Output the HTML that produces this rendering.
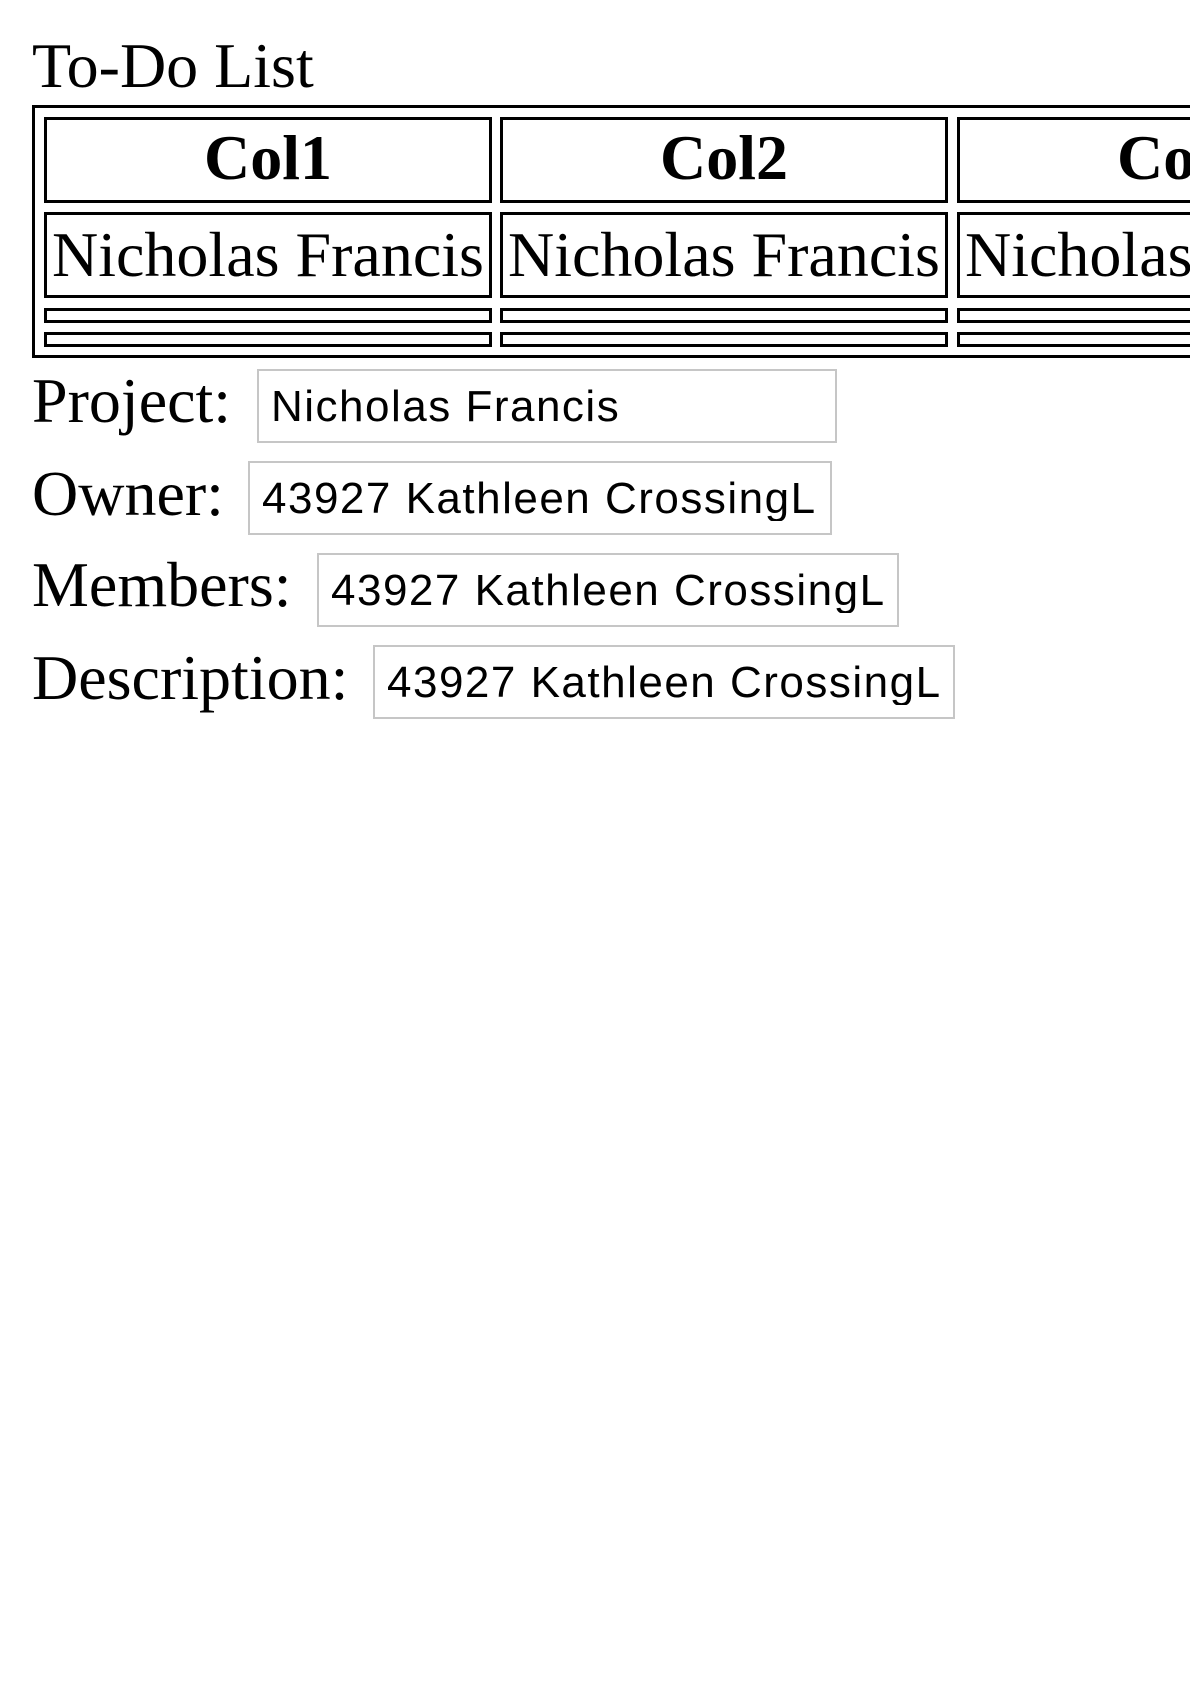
<!DOCTYPE html>
<html><head><meta charset="utf-8"><style>
html,body{margin:0;padding:0;width:1190px;height:1684px;overflow:hidden;background:#fff;}
#w{position:relative;width:1190px;height:1684px;overflow:hidden;}
.a{position:absolute;white-space:nowrap;}
.s{font-family:"Liberation Serif",serif;font-size:64px;line-height:64px;color:#000;}
.b{position:absolute;border:3px solid #000;box-sizing:border-box;}
.in{position:absolute;border:2px solid #c6c6c6;box-sizing:border-box;height:74px;overflow:hidden;}
.in span{position:absolute;left:12px;right:12px;top:14px;overflow:hidden;white-space:nowrap;font-family:"Liberation Sans",sans-serif;font-size:44px;line-height:44px;letter-spacing:1.5px;color:#000;}
</style></head><body><div id="w">
<div class="a s" style="left:32px;top:34px;">To-Do List</div>

<div class="b" style="left:32px;top:105px;width:1170px;height:253px;"></div>

<div class="b" style="left:44px;top:117px;width:448px;height:86px;"></div>
<div class="b" style="left:500px;top:117px;width:448px;height:86px;"></div>
<div class="b" style="left:957px;top:117px;width:448px;height:86px;"></div>
<div class="a s" style="left:44px;width:448px;text-align:center;top:126px;font-weight:bold;">Col1</div>
<div class="a s" style="left:500px;width:448px;text-align:center;top:126px;font-weight:bold;">Col2</div>
<div class="a s" style="left:957px;width:448px;text-align:center;top:126px;font-weight:bold;">Col3</div>

<div class="b" style="left:44px;top:212px;width:448px;height:86px;"></div>
<div class="b" style="left:500px;top:212px;width:448px;height:86px;"></div>
<div class="b" style="left:957px;top:212px;width:448px;height:86px;"></div>
<div class="a s" style="left:52px;top:223px;">Nicholas Francis</div>
<div class="a s" style="left:508px;top:223px;">Nicholas Francis</div>
<div class="a s" style="left:965px;top:223px;">Nicholas Francis</div>

<div class="b" style="left:44px;top:308px;width:448px;height:15px;"></div>
<div class="b" style="left:500px;top:308px;width:448px;height:15px;"></div>
<div class="b" style="left:957px;top:308px;width:448px;height:15px;"></div>
<div class="b" style="left:44px;top:332px;width:448px;height:15px;"></div>
<div class="b" style="left:500px;top:332px;width:448px;height:15px;"></div>
<div class="b" style="left:957px;top:332px;width:448px;height:15px;"></div>

<div class="a s" style="left:32px;top:369px;">Project:</div>
<div class="in" style="left:257px;top:369px;width:580px;"><span>Nicholas Francis</span></div>

<div class="a s" style="left:32px;top:462px;">Owner:</div>
<div class="in" style="left:248px;top:461px;width:584px;"><span>43927 Kathleen CrossingLane</span></div>

<div class="a s" style="left:32px;top:553px;">Members:</div>
<div class="in" style="left:317px;top:553px;width:582px;"><span>43927 Kathleen CrossingLane</span></div>

<div class="a s" style="left:32px;top:646px;">Description:</div>
<div class="in" style="left:373px;top:645px;width:582px;"><span>43927 Kathleen CrossingLane</span></div>
</div></body></html>
